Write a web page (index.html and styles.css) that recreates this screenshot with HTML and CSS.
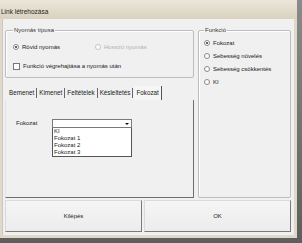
FILE: index.html
```html
<!DOCTYPE html>
<html lang="hu">
<head>
    <meta charset="UTF-8">
    <meta name="viewport" content="width=device-width, initial-scale=1.0">
    <title>Link létrehozása</title>
    <link rel="stylesheet" href="styles.css">
</head>
<body>

    <div class="window">
        <div class="titlebar">Link létrehozása</div>

        <div class="client">
            <div class="main">
                <div class="left">
                    <fieldset class="group press">
                        <legend>Nyomás típusa</legend>
                        <div class="press-row">
                            <label class="opt short"><span class="radio on"></span>Rövid nyomás</label>
                            <label class="opt disabled"><span class="radio"></span>Hosszú nyomás</label>
                        </div>
                        <label class="opt after"><span class="check"></span>Funkció végrehajtása a nyomás után</label>
                    </fieldset>

                    <div class="tabs">
                        <span class="tab">Bemenet</span>
                        <span class="tab">Kimenet</span>
                        <span class="tab">Feltételek</span>
                        <span class="tab">Késleltetés</span>
                        <span class="tab active">Fokozat</span>
                    </div>

                    <div class="panel">
                        <div class="field">
                            <span class="field-label">Fokozat</span>
                            <div class="combo">
                                <div class="combo-box"><span class="arrow"></span></div>
                                <ul class="combo-list">
                                    <li>KI</li>
                                    <li>Fokozat 1</li>
                                    <li>Fokozat 2</li>
                                    <li>Fokozat 3</li>
                                </ul>
                            </div>
                        </div>
                    </div>
                </div>

                <fieldset class="group func">
                    <legend>Funkció</legend>
                    <label class="opt"><span class="radio on"></span>Fokozat</label>
                    <label class="opt"><span class="radio"></span>Sebesség növelés</label>
                    <label class="opt"><span class="radio"></span>Sebesség csökkentés</label>
                    <label class="opt"><span class="radio"></span>KI</label>
                </fieldset>
            </div>

            <div class="buttons">
                <button class="btn exit">Kilépés</button>
                <button class="btn ok">OK</button>
            </div>
        </div>
    </div>

</body>
</html>
```

FILE: styles.css
```css
body {
    margin: 0;
    width: 302px;
    height: 243px;
    background: linear-gradient(#8a8a8a, #5e5e5e);
    font-family: "Liberation Sans", Arial, sans-serif;
    font-size: 6px;
    color: #1a1a1a;
    overflow: hidden;
}
.window {
    width: 297px;
    height: 238px;
    background: #e0d9c8;
    display: flex;
    flex-direction: column;
}
.titlebar {
    height: 19px;
    line-height: 23px;
    padding-left: 1px;
    font-size: 6.5px;
    color: #1e1e1e;
    background: linear-gradient(#ebe6d9, #dad2bf);
}
.client {
    margin: 0 3px 3px 2px;
    flex: 1;
    background: #f0f0f0;
    border-left: 1px solid #c8c8c8;
    padding: 7px 0 3px 2px;
    display: flex;
    flex-direction: column;
}
.main {
    display: flex;
    gap: 4px;
    height: 172px;
}
.left {
    width: 189px;
    display: flex;
    flex-direction: column;
}
.group {
    margin: 0;
    border: 1px solid #bdbdbd;
    border-radius: 2px;
    box-shadow: inset 1px 1px 0 #fff;
}
.group legend {
    padding: 0 1px;
    line-height: 8px;
    color: #333;
}
.press {
    padding: 9px 0 7px 7px;
}
.press-row {
    display: flex;
}
.opt {
    display: flex;
    align-items: center;
    gap: 3px;
    height: 8px;
    line-height: 8px;
    white-space: nowrap;
}
.short {
    width: 82px;
}
.disabled {
    color: #b0b0b0;
}
.after {
    margin-top: 11px;
}
.radio {
    width: 4px;
    height: 4px;
    border: 1px solid #8a8a8a;
    border-radius: 50%;
    background: #fff;
    display: flex;
    align-items: center;
    justify-content: center;
}
.radio.on::after {
    content: "";
    width: 2px;
    height: 2px;
    border-radius: 50%;
    background: #333;
}
.disabled .radio {
    border-color: #c4c4c4;
}
.check {
    width: 5px;
    height: 5px;
    border: 1px solid #777;
    background: #fff;
}
.tabs {
    margin-top: 8px;
    height: 14px;
    display: flex;
    align-items: flex-end;
    padding-left: 2px;
}
.tab {
    line-height: 10px;
    padding: 0 2px;
    border-right: 1px solid #666;
    margin-bottom: 2px;
    font-size: 6.3px;
}
.tab.active {
    margin-left: 1px;
    margin-bottom: 0;
    line-height: 14px;
    background: #f6f6f6;
    border-right-color: #555;
}
.panel {
    flex: 1;
    border-left: 1px solid #e2e2e2;
    border-right: 1px solid #6e6e6e;
    border-bottom: 1px solid #6e6e6e;
    padding: 19px 0 0 10px;
}
.field {
    display: flex;
    align-items: flex-start;
}
.field-label {
    width: 36px;
    line-height: 9px;
}
.combo {
    width: 80px;
}
.combo-box {
    height: 7px;
    border: 1px solid #7a7a7a;
    background: #fff;
    display: flex;
    justify-content: flex-end;
    align-items: center;
    padding-right: 2px;
}
.arrow {
    width: 0;
    height: 0;
    border-left: 2px solid transparent;
    border-right: 2px solid transparent;
    border-top: 2px solid #111;
}
.combo-list {
    list-style: none;
    margin: 0;
    padding: 0 1px;
    border: 1px solid #555;
    border-top: none;
    background: #fff;
}
.combo-list li {
    line-height: 7px;
    font-size: 6px;
}
.func {
    width: 93px;
    box-sizing: border-box;
    padding: 5px 0 0 5px;
    display: flex;
    flex-direction: column;
    gap: 5px;
}
.buttons {
    display: flex;
    gap: 2px;
    margin-top: 2px;
    height: 32px;
}
.btn {
    font-family: inherit;
    font-size: 6px;
    color: #222;
    background: linear-gradient(#f5f5f5, #ececec);
    border: 1px solid #dadada;
    border-right-color: #7a7a7a;
    border-bottom-color: #7a7a7a;
    padding: 0;
}
.exit {
    width: 137px;
}
.ok {
    width: 147px;
}
```
